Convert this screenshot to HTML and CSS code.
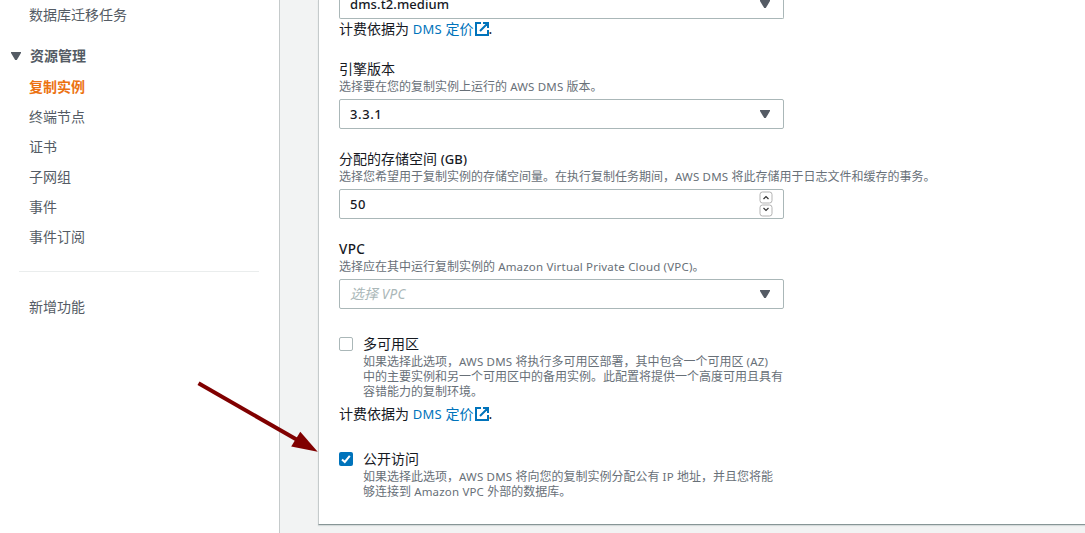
FILE: index.html
```html
<!DOCTYPE html>
<html lang="zh-CN">
<head>
<meta charset="utf-8">
<title>AWS DMS</title>
<link rel="stylesheet" href="styles.css">
</head>
<body>
<div class="page">
  <nav class="sidebar">
    <a class="nav-item nav-first">数据库迁移任务</a>
    <div class="nav-heading"><svg class="caret" viewBox="0 0 10 8"><path d="M0 0h10v1L5.8 8H4.2L0 1z"/></svg><span>资源管理</span></div>
    <a class="nav-item active">复制实例</a>
    <a class="nav-item">终端节点</a>
    <a class="nav-item">证书</a>
    <a class="nav-item">子网组</a>
    <a class="nav-item">事件</a>
    <a class="nav-item">事件订阅</a>
    <hr class="divider">
    <a class="nav-item">新增功能</a>
  </nav>
  <main class="content">
    <section class="card">
      <div class="control cut"><span class="latin value">dms.t2.medium</span><svg class="caret" viewBox="0 0 10 8"><path d="M0 0h10v1L5.8 8H4.2L0 1z"/></svg></div>
      <p class="pricing">计费依据为 <a class="link"><span class="latin name">DMS</span> 定价<svg class="external" viewBox="0 0 14 14"><path d="M6 1H1v12h12V8M8 1h5v5M13 1L5 9"/></svg></a>.</p>

      <div class="field">
        <label class="label">引擎版本</label>
        <p class="hint">选择要在您的复制实例上运行的 <span class="latin">AWS DMS</span> 版本。</p>
        <div class="control"><span class="latin digits">3.3.1</span><svg class="caret" viewBox="0 0 10 8"><path d="M0 0h10v1L5.8 8H4.2L0 1z"/></svg></div>
      </div>

      <div class="field">
        <label class="label">分配的存储空间 <span class="latin value">(GB)</span></label>
        <p class="hint">选择您希望用于复制实例的存储空间量。在执行复制任务期间，<span class="latin">AWS DMS</span> 将此存储用于日志文件和缓存的事务。</p>
        <div class="control number"><span class="latin digits">50</span><svg class="stepper" viewBox="0 0 14 26"><rect x="1" y="1" width="12" height="11" rx="2.5"/><rect x="1" y="14" width="12" height="11" rx="2.5"/><path d="M4.5 8L7 5.5 9.5 8M4.5 17L7 19.5 9.5 17"/></svg></div>
      </div>

      <div class="field">
        <label class="label"><span class="latin caps">VPC</span></label>
        <p class="hint">选择应在其中运行复制实例的 <span class="latin">Amazon Virtual Private Cloud (VPC)</span>。</p>
        <div class="control"><span class="placeholder">选择 <span class="caps">VPC</span></span><svg class="caret" viewBox="0 0 10 8"><path d="M0 0h10v1L5.8 8H4.2L0 1z"/></svg></div>
      </div>

      <div class="option">
        <span class="checkbox"></span>
        <div>
          <label class="label">多可用区</label>
          <p class="hint">如果选择此选项，<span class="latin">AWS DMS</span> 将执行多可用区部署，其中包含一个可用区 <span class="latin">(AZ)</span><br>中的主要实例和另一个可用区中的备用实例。此配置将提供一个高度可用且具有<br>容错能力的复制环境。</p>
        </div>
      </div>
      <p class="pricing spaced">计费依据为 <a class="link"><span class="latin name">DMS</span> 定价<svg class="external" viewBox="0 0 14 14"><path d="M6 1H1v12h12V8M8 1h5v5M13 1L5 9"/></svg></a>.</p>
      <div class="option">
        <span class="checkbox checked"><svg viewBox="0 0 14 14"><path d="M3 7.5L5.8 10 10.8 3.8"/></svg></span>
        <div>
          <label class="label">公开访问</label>
          <p class="hint">如果选择此选项，<span class="latin">AWS DMS</span> 将向您的复制实例分配公有 <span class="latin">IP</span> 地址，并且您将能<br>够连接到 <span class="latin">Amazon VPC</span> 外部的数据库。</p>
        </div>
      </div>
    </section>
  </main>
  <svg class="arrow" viewBox="0 0 130 80"><path class="shaft" d="M8.5 8.3L107 64.8"/><path class="head" d="M127.7 76.7L110.3 56.7 101.2 71.4z"/></svg>
</div>
</body>
</html>
```
FILE: styles.css
```css
* { box-sizing: border-box; }
body {
  margin: 0;
  background: #f2f3f3;
  font: 14px/20px "Noto Sans", "Noto Sans CJK SC", sans-serif;
  color: #16191f;
}
p { margin: 0; }
.page {
  position: relative;
  display: flex;
  width: 1085px;
  height: 533px;
  overflow: hidden;
}
.sidebar {
  width: 280px;
  flex: none;
  background: #fff;
  border-right: 1px solid #c5cacb;
  color: #545b64;
}
.nav-item {
  display: block;
  height: 30px;
  padding-left: 29px;
  line-height: 30px;
}
.nav-heading {
  display: flex;
  align-items: center;
  gap: 9px;
  height: 30px;
  margin: 11px 0 1px;
  padding-left: 11px;
  font-weight: 700;
}
.active { color: #ec7211; font-weight: 700; }
.divider {
  height: 1px;
  margin: 19px 20px 20px 19px;
  border: 0;
  background: #eaeded;
}
.caret { width: 10px; height: 8px; flex: none; fill: #545b64; }
.content {
  flex: 1;
  padding-left: 38px;
}
.card {
  height: 525px;
  padding-left: 20px;
  background: #fff;
  border-left: 1px solid #c5cacb;
  border-bottom: 1px solid #879596;
  box-shadow: 0 1px 1px #d5dbdb;
}
.control {
  display: flex;
  align-items: center;
  justify-content: space-between;
  width: 445px;
  height: 30px;
  padding: 0 13px 0 10px;
  border: 1px solid #aab7b8;
  border-radius: 2px;
}
.cut {
  height: 19px;
  padding-bottom: 11px;
  border-top: 0;
  border-radius: 0 0 2px 2px;
}
.latin { font-weight: 500; }
.value { font-size: 13px; letter-spacing: .1px; }
.digits { font-size: 13px; letter-spacing: .6px; }
.caps { font-size: 13.5px; letter-spacing: .4px; }
.name { font-size: 13px; letter-spacing: .3px; font-weight: 400; }
.number { padding-right: 10px; }
.stepper {
  width: 14px;
  height: 26px;
  fill: #fff;
  stroke: #b3b3b3;
}
.stepper path { fill: none; stroke: #333; stroke-width: 1.2; }
.placeholder { color: #aab7b8; font-style: italic; }
.field { margin-top: 20px; }
.label { display: block; height: 20px; }
.hint {
  color: #687078;
  font-size: 12px;
  line-height: 15px;
  white-space: nowrap;
}
.hint .latin { font-weight: 400; font-size: 11.5px; letter-spacing: .18px; }
.field .hint { margin-bottom: 5px; }
.pricing { height: 20px; white-space: nowrap; }
.spaced { margin-top: 5px; }
.link { color: #0073bb; }
.external {
  width: 14px;
  height: 14px;
  margin-left: 1px;
  vertical-align: -2px;
  fill: none;
  stroke: #0073bb;
  stroke-width: 2;
}
.option {
  display: flex;
  gap: 10px;
  margin-top: 25px;
}
.checkbox {
  width: 14px;
  height: 14px;
  margin-top: 3px;
  flex: none;
  border: 1px solid #aab7b8;
  border-radius: 2px;
}
.checked { border: 0; background: #0073bb; }
.checked svg {
  display: block;
  fill: none;
  stroke: #fff;
  stroke-width: 2;
}
.arrow {
  position: absolute;
  left: 190px;
  top: 375px;
  width: 130px;
  height: 80px;
}
.shaft { stroke: #800000; stroke-width: 4; }
.head { fill: #800000; }
```
